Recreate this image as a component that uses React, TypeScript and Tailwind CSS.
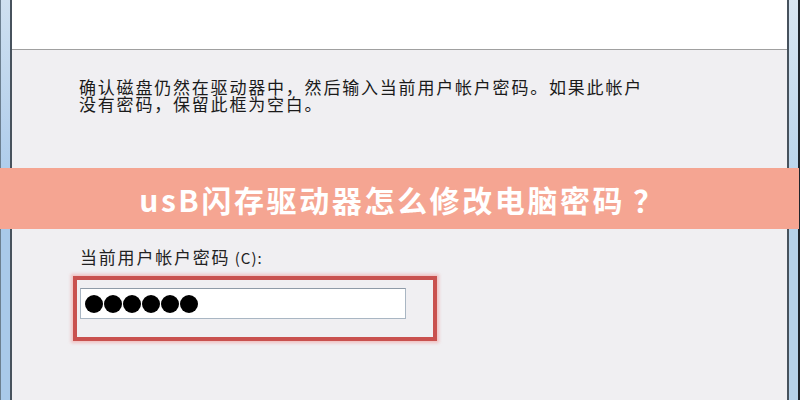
import React from "react";

export default function App() {
  const cjk = { fontFamily: '"Noto Sans CJK SC", "Noto Sans", sans-serif' };
  return (
    <div className="w-[800px] h-[400px] flex overflow-hidden bg-[#f0eff2]">
      {/* left frame */}
      <div className="w-[12px] h-full flex">
        <div className="w-[1px] bg-[#6c7f90]" />
        <div className="flex-1 bg-gradient-to-b from-[#cfe0f0] via-[#a9c9ea] to-[#a9c9ea]" />
        <div className="w-[2px] bg-[#47525d]" />
      </div>
      {/* content */}
      <div className="flex-1 h-full flex flex-col relative" style={cjk}>
        <div className="h-[50px] bg-white border-b border-[#a0a0a0]" />
        <div className="pt-[28px] pl-[67px] text-[17px] leading-[17px] tracking-[1.8px] text-[#1a1a1a]">
          <div>确认磁盘仍然在驱动器中，然后输入当前用户帐户密码。如果此帐户</div>
          <div>没有密码，保留此框为空白。</div>
        </div>
        <div className="mt-[56px] h-[61px] -mx-[12px] bg-[#f5a592] flex items-center justify-center">
          <span className="text-white font-bold text-[30px] leading-none tracking-[2.6px] pl-[6px]">usB闪存驱动器怎么修改电脑密码<span className="ml-[8px]">？</span></span>
        </div>
        <div className="mt-[19px] pl-[68px] text-[17px] leading-[17px] tracking-[1.8px] text-[#222]">
          当前用户帐户密码<span className="text-[15px] tracking-[1px]"> (C):</span>
        </div>
        <div className="mt-[10px] ml-[61px] w-[364px] h-[65px] border-[4px] border-[#c9514f] shadow-[0_0_3px_2px_rgba(240,160,160,0.6)] pt-[8px] pl-[3px]">
          <div className="w-[326px] h-[31px] bg-white border border-[#a9b6c3] border-t-[#8f9ba8] flex items-center pl-[4px] gap-[1px]">
            {[0, 1, 2, 3, 4, 5].map((i) => (
              <div key={i} className="w-[18px] h-[18px] rounded-full bg-black" />
            ))}
          </div>
        </div>
      </div>
      {/* right frame */}
      <div className="w-[13px] h-full flex">
        <div className="w-[2px] bg-[#47525d]" />
        <div className="flex-1 bg-gradient-to-b from-[#d8e6f2] via-[#b6d2ea] to-[#b6d2ea]" />
        <div className="w-[2px] bg-[#1e252c]" />
      </div>
    </div>
  );
}
